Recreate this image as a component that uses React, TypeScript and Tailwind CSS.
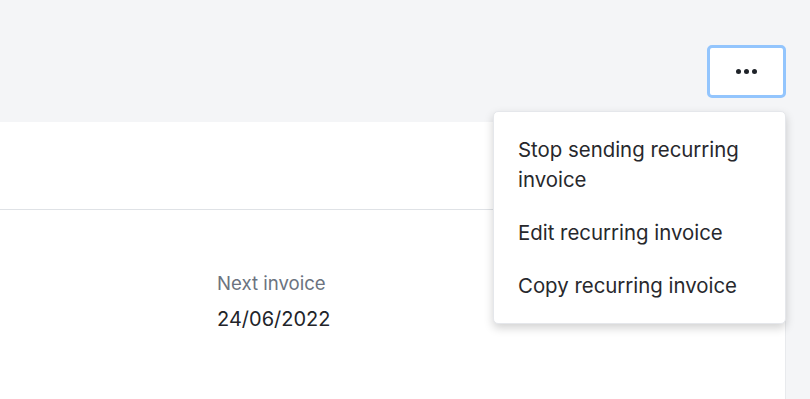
import React from 'react';

const menuItems = [
    'Stop sending recurring invoice',
    'Edit recurring invoice',
    'Copy recurring invoice',
];

const App: React.FC = () => {
    return (
        <div
            className="w-[810px] h-[399px] overflow-hidden bg-[#f4f5f7] flex flex-col"
            style={{ fontFamily: 'Inter, "Noto Sans", sans-serif' }}
        >
            {/* Header */}
            <div className="h-[122px] shrink-0 flex justify-end items-start pt-[45px] pr-6">
                <div className="relative">
                    <button className="w-[79px] h-[53px] bg-white border-[3px] border-[#93c5fd] rounded-[5px] flex items-center justify-center gap-[3px]">
                        <span className="w-[5px] h-[5px] rounded-full bg-[#1f2329]" />
                        <span className="w-[5px] h-[5px] rounded-full bg-[#1f2329]" />
                        <span className="w-[5px] h-[5px] rounded-full bg-[#1f2329]" />
                    </button>

                    {/* Dropdown menu */}
                    <div className="absolute right-0 top-[66px] z-10 w-[293px] bg-white rounded-[5px] border border-[#e5e7eb] shadow-[0_4px_10px_rgba(0,0,0,0.18)] py-[11px]">
                        {menuItems.map((item) => (
                            <div
                                key={item}
                                className="px-6 py-[11.5px] text-[20.4px] leading-[30px] text-[#27282c]"
                            >
                                {item}
                            </div>
                        ))}
                    </div>
                </div>
            </div>

            {/* Card */}
            <div className="flex-1 -ml-5 mr-6 bg-white border-r border-[#e8eaed]">
                <div className="h-[88px] border-b border-[#dfe2e6]" />
                <div className="pl-[237px] pt-[61px]">
                    <div className="text-[18.6px] leading-6 text-[#6b7380]">Next invoice</div>
                    <div className="mt-[10px] text-[20px] leading-7 text-[#222429]">24/06/2022</div>
                </div>
            </div>
        </div>
    );
};

export default App;
